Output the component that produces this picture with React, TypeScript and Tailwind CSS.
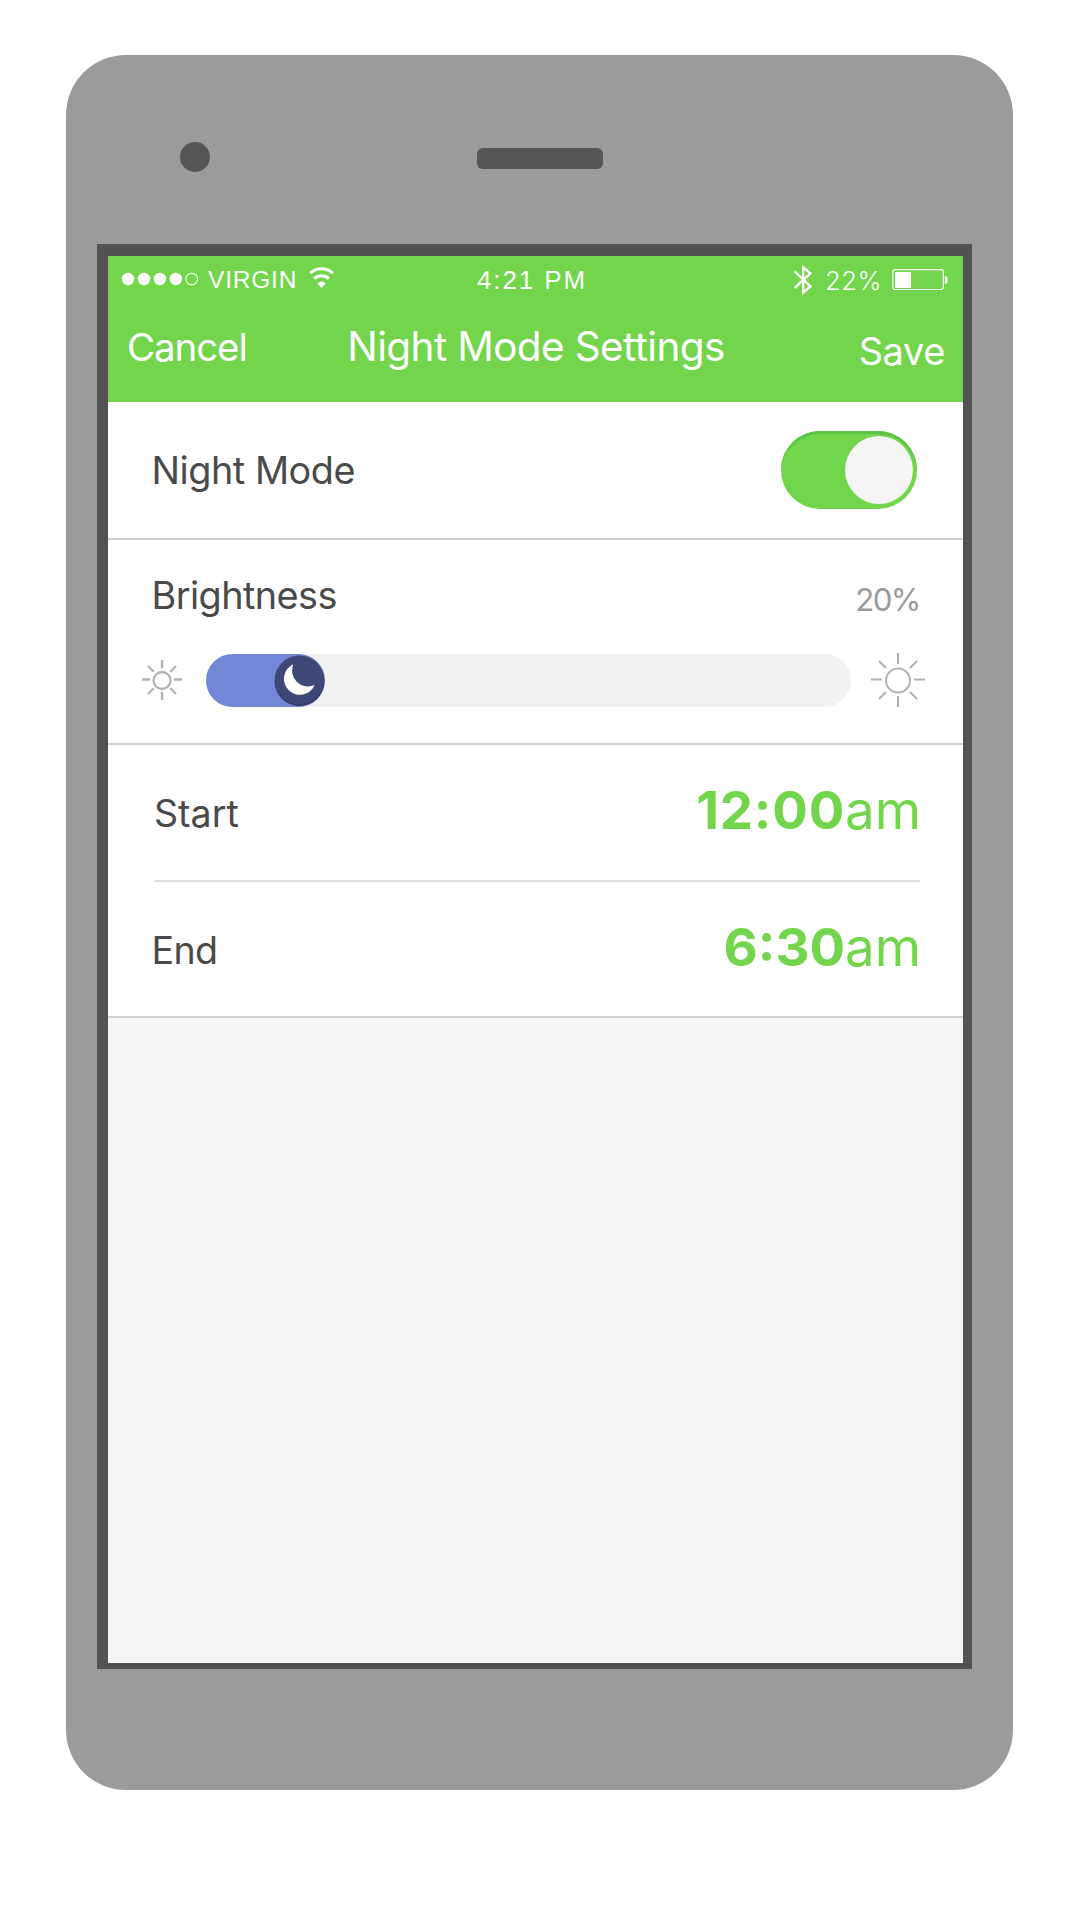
import type { ReactNode } from "react";

function SignalDots() {
  return (
    <svg className="mt-[16px] ml-[13px] h-[14px] w-[78px] shrink-0" viewBox="121 272 78 14">
      {[128, 144, 159.9, 175.8].map((x) => (
        <circle key={x} cx={x} cy="279" r="6.2" fill="#fff" />
      ))}
      <circle cx="191.7" cy="279" r="5.8" fill="none" stroke="#fff" strokeWidth="1.1" />
    </svg>
  );
}

function Wifi() {
  return (
    <svg className="mt-[10px] ml-[9px] h-[24px] w-[28px] shrink-0" viewBox="307 266 28 24" fill="none" stroke="#fff">
      <path d="M310.2 273.2A16.6 16.6 0 0 1 332.8 273.2" strokeWidth="3.2" />
      <path d="M314.2 278.7A10.6 10.6 0 0 1 328.8 278.7" strokeWidth="3" />
      <path d="M317.3 283.4Q321.5 279.4 325.7 283.4L321.5 288Z" fill="#fff" stroke="none" />
    </svg>
  );
}

function Bluetooth() {
  return (
    <svg className="h-[32px] w-[20px] shrink-0" viewBox="793 264 20 32" fill="none" stroke="#fff" strokeWidth="2.4">
      <path d="M794.6 271.4L810.4 286.4L803.2 292.6V267.4L810.4 273.4L794.6 288" />
    </svg>
  );
}

function Battery() {
  return (
    <svg className="mt-[12px] h-[22px] w-[57px] shrink-0" viewBox="892 268 57 22">
      <rect x="892.9" y="269.7" width="50.4" height="19.8" rx="2.2" fill="none" stroke="#fff" strokeWidth="1.2" />
      <rect x="895" y="272" width="16" height="16" fill="#fff" />
      <path d="M945 276C949 276 949 284 945 284Z" fill="#fff" />
    </svg>
  );
}

function Moon() {
  return (
    <svg className="size-[51px]" viewBox="0 0 51 51">
      <circle cx="25.5" cy="26" r="25" fill="#2f3964" />
      <circle cx="25.5" cy="25" r="24.5" fill="#3d4877" />
      <path d="M19.3 9.3A16 16 0 1 0 40.7 30A16 16 0 0 1 19.3 9.3Z" fill="#fff" />
    </svg>
  );
}

function Sun({ size, r, inner, diagIn, diagOut, stroke, className }: {
  size: number; r: number; inner: number; diagIn: number; diagOut: number; stroke: number; className: string;
}) {
  const h = size / 2;
  return (
    <svg className={className} viewBox={`${-h} ${-h} ${size} ${size}`} fill="none" stroke="#b2b2b2" strokeWidth={stroke}>
      <circle r={r} cy="0.5" />
      <path d={`M0 ${-h}V${-inner}M0 ${inner}V${h}M${-h} -0.5H${-inner}M${inner} -0.5H${h}`} />
      <path d={`M${-diagOut} ${-diagOut}L${-diagIn} ${-diagIn}M${diagOut} ${-diagOut}L${diagIn} ${-diagIn}M${-diagOut} ${diagOut}L${-diagIn} ${diagIn}M${diagOut} ${diagOut}L${diagIn} ${diagIn}`} />
    </svg>
  );
}

function TimeRow({ label, time }: { label: ReactNode; time: ReactNode }) {
  return (
    <div className="flex h-[135px] items-start justify-between pr-[42px]">
      {label}
      <p className="flex pt-[39px] text-[52.8px] leading-none text-[#73d54b]">
        {time}
        <span>am</span>
      </p>
    </div>
  );
}

export default function App() {
  return (
    <div className="flex h-[1920px] w-[1080px] flex-col overflow-hidden bg-white pt-[55px] pl-[66px] font-['Inter',sans-serif]">
      <div className="flex h-[1734.6px] w-[947.4px] flex-col rounded-[60px] bg-[#9b9b9b]">
        <div className="flex h-[189px] shrink-0 items-start pl-[114px]">
          <div className="mt-[87px] size-[30px] rounded-full bg-[#555]" />
          <div className="mt-[93px] ml-[267px] h-[21px] w-[126px] rounded-[6px] bg-[#555]" />
        </div>

        <div className="ml-[31px] h-[1424.7px] w-[875px] shrink-0 bg-[#525252] pt-[12px] pl-[11px]">
          <main className="flex h-[1407px] w-[855px] flex-col bg-[#f5f5f5] text-[#4a4a4a]">
            <header className="h-[145.6px] shrink-0 bg-[#73d54b] text-white">
              <div className="flex h-[50px] items-start">
                <SignalDots />
                <span className="mt-[12px] ml-[9px] w-[90px] font-['Liberation_Sans',sans-serif] text-[24.5px] leading-none tracking-[0.8px]">VIRGIN</span>
                <Wifi />
                <span className="mt-[11.3px] ml-[142px] w-[120px] font-['Liberation_Sans',sans-serif] text-[26px] leading-none tracking-[1.9px] whitespace-nowrap">4:21 PM</span>
                <div className="ml-auto flex pr-[14px]">
                  <div className="mt-[8px]"><Bluetooth /></div>
                  <span className="mt-[12px] ml-[12px] w-[67px] text-[25.6px] leading-none font-light tracking-[0.6px]">22%</span>
                  <Battery />
                </div>
              </div>
              <div className="flex items-start justify-between pr-[18px] pl-[18px] leading-none">
                <button className="mt-[21.5px] w-[121px] pl-px text-left text-[38.5px] leading-none tracking-[-1.1px]">Cancel</button>
                <h1 className="mt-[21px] text-[40.5px] leading-none tracking-[-0.64px]">Night Mode Settings</h1>
                <button className="mt-[26px] w-[120px] text-right text-[38px] leading-none tracking-[-0.4px]">Save</button>
              </div>
            </header>

            <section className="flex h-[138.4px] shrink-0 items-start justify-between border-b-2 border-[#cfcfcf] bg-white pr-[45.7px] pl-[43.5px]">
              <h2 className="mt-[50px] text-[37.8px] leading-none tracking-[-0.46px]">Night Mode</h2>
              <div className="mt-[29.4px] flex h-[77.6px] w-[136.6px] justify-end rounded-full bg-[#73d54b] pt-[5px] pr-[4px] shadow-[inset_0_3px_0_#5bc443]">
                <div className="size-[68.5px] rounded-full bg-[#f5f5f5]" />
              </div>
            </section>

            <section className="h-[205px] shrink-0 border-b-2 border-[#d0d0d0] bg-white">
              <div className="flex h-[113.5px] items-start justify-between pr-[43px] pl-[43.5px]">
                <h2 className="mt-[37px] text-[37.8px] leading-none tracking-[-0.55px]">Brightness</h2>
                <span className="mt-[45px] text-[31.2px] leading-none tracking-[-1.5px] text-[#9b9b9b]">20%</span>
              </div>
              <div className="flex items-center pl-[34px]">
                <Sun className="size-[40px]" size={40} r={8.5} inner={12} diagIn={8.3} diagOut={14} stroke={2.3} />
                <div className="ml-[24px] h-[53px] w-[645px] rounded-full bg-[#f1f1f1]">
                  <div className="flex h-full w-[119px] items-center justify-end rounded-full bg-[#7287d5]">
                    <Moon />
                  </div>
                </div>
                <Sun className="ml-[20px] size-[54px]" size={54} r={12} inner={16} diagIn={12} diagOut={19} stroke={2} />
              </div>
            </section>

            <section className="h-[273px] shrink-0 border-b-2 border-[#d0d0d0] bg-white">
              <TimeRow
                time={<span className="font-bold tracking-[0.8px]">12:00</span>}
                label={<h2 className="mt-[50.5px] ml-[46px] text-[37.6px] leading-none">Start</h2>}
              />
              <div className="mr-[43px] ml-[46px] h-[2px] bg-[#dfdfdf]" />
              <TimeRow
                time={<span className="font-bold">6:30</span>}
                label={<h2 className="mt-[50.2px] ml-[43.5px] text-[37.6px] leading-none tracking-[-0.6px]">End</h2>}
              />
            </section>
          </main>
        </div>
      </div>
    </div>
  );
}
